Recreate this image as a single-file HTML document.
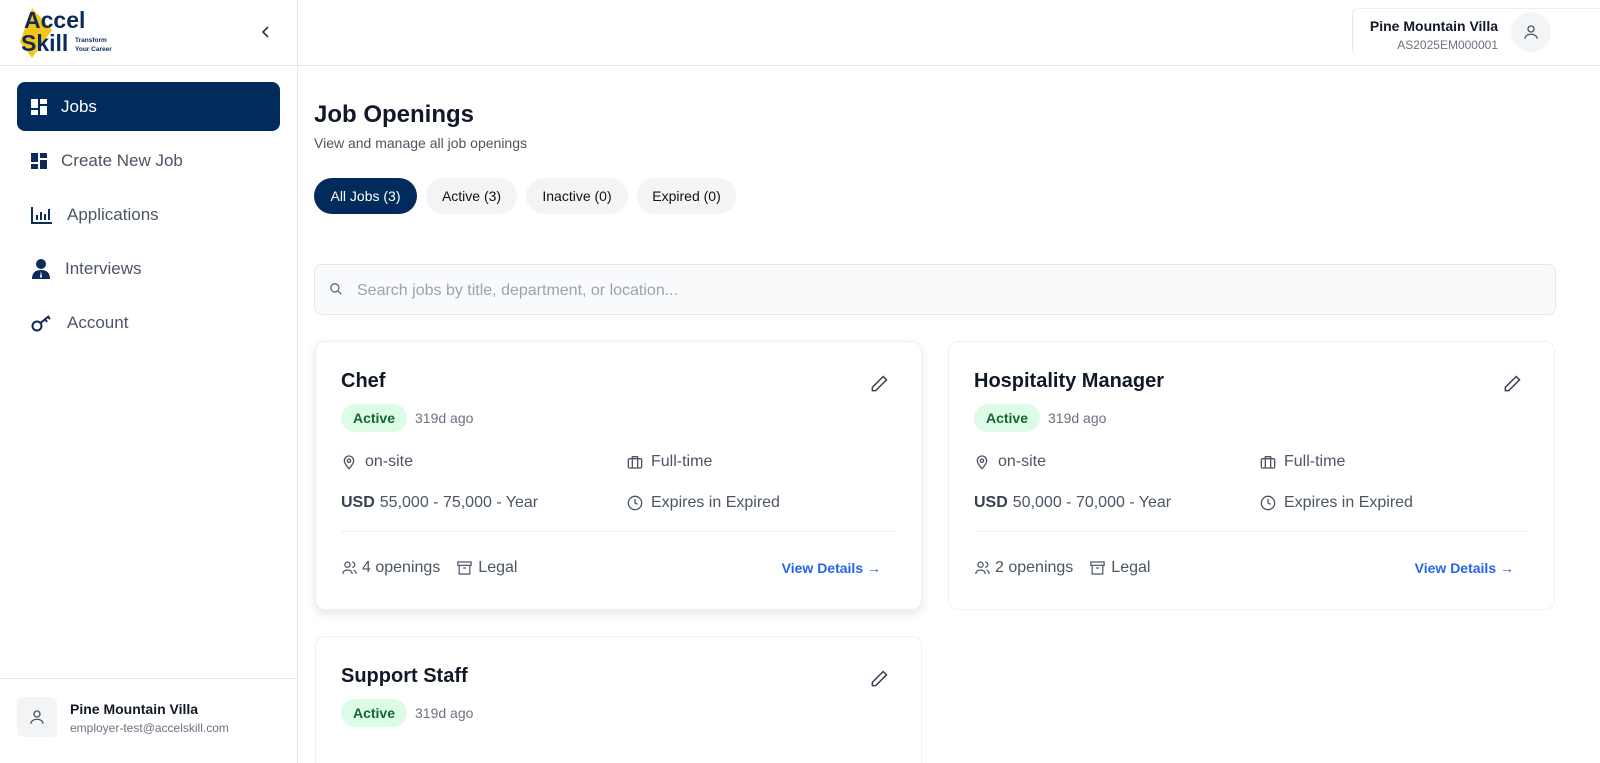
<!DOCTYPE html>
<html style="width:1600px;height:763px;overflow:hidden"><head><meta charset="utf-8"><style>
*{box-sizing:border-box;margin:0;padding:0}
body{width:1600px;height:763px;overflow:hidden;font-family:"Liberation Sans",sans-serif;background:#fff;color:#111827;position:relative}
.sb{position:absolute;left:0;top:0;width:298px;height:763px;border-right:1px solid #e5e7eb;background:#fff}
.logo{position:absolute;left:18px;top:6px}
.nav{position:absolute;left:17px;width:263px;height:49px;border-radius:8px;display:flex;align-items:center;padding-left:14px;font-size:17px;color:#4b5563}
.nav svg{margin-right:14px}
.nav.on{background:#002b5c;color:#fff}
.hdr{position:absolute;left:298px;top:0;right:0;height:66px;border-bottom:1px solid #e5e7eb}
.ub{position:absolute;left:1352px;top:8px;width:248px;height:48px;border-left:1px solid #e5e7eb;border-top:1px solid #eee;border-radius:6px 0 0 6px}
.av{position:absolute;width:40px;height:40px;border-radius:50%;background:#f3f4f6;display:flex;align-items:center;justify-content:center}
.tab{position:absolute;top:178px;height:36px;border-radius:18px;background:#f3f4f6;font-size:14px;display:flex;align-items:center;justify-content:center;color:#111}
.card{position:absolute;width:607px;border:1px solid #eef0f2;border-radius:10px;background:#fff;overflow:hidden}
.card h3{position:absolute;left:25px;top:28px;font-size:20px;font-weight:600}
.pen{position:absolute;right:32px;top:32px}
.badge{position:absolute;left:25px;top:62px;height:28px;width:66px;border-radius:14px;background:#dcfce7;color:#166534;font-size:14px;font-weight:600;display:flex;align-items:center;justify-content:center}
.ago{position:absolute;left:99px;top:68px;font-size:14px;color:#6b7280}
.it{position:absolute;font-size:16px;color:#4b5563;display:flex;align-items:center}
.it svg{margin-right:8px}
.sep{position:absolute;left:25px;right:25px;top:189px;border-top:1px solid #eef0f2}
.vd{position:absolute;right:40px;top:218px;color:#2563eb;font-size:14px;font-weight:600}
</style></head><body>
<div class="sb">
 <div class="logo">
  <svg width="110" height="52" viewBox="0 0 110 52">
   <polygon points="14,2 34,24 14,52 2,36" fill="#f5c518"/>
   <text x="6" y="22" font-family="Liberation Sans" font-weight="700" font-size="23" fill="#0d2a5c">Accel</text>
   <text x="3" y="45" font-family="Liberation Sans" font-weight="700" font-size="23" fill="#0d2a5c">Skill</text>
   <text x="57" y="36" font-family="Liberation Sans" font-size="6.5" fill="#0d2a5c" font-weight="700">Transform</text>
   <text x="57" y="45" font-family="Liberation Sans" font-size="6.5" fill="#0d2a5c" font-weight="700">Your Career</text>
  </svg>
 </div>
 <svg style="position:absolute;left:260px;top:25px" width="12" height="14" viewBox="0 0 12 14"><path d="M8 2 3 7l5 5" fill="none" stroke="#333" stroke-width="1.6"/></svg>
 <div style="position:absolute;left:0;top:65px;width:297px;border-top:1px solid #e5e7eb"></div>
 <div class="nav on" style="top:82px"><svg width="16" height="16"><rect x="0" y="0" width="7" height="9" fill="#fff"/><rect x="9" y="0" width="7" height="5" fill="#fff"/><rect x="0" y="11" width="7" height="5" fill="#fff"/><rect x="9" y="7" width="7" height="9" fill="#fff"/></svg>Jobs</div>
 <div class="nav" style="top:136px"><svg width="16" height="16"><rect x="0" y="0" width="7" height="9" fill="#0d2a5c"/><rect x="9" y="0" width="7" height="5" fill="#0d2a5c"/><rect x="0" y="11" width="7" height="5" fill="#0d2a5c"/><rect x="9" y="7" width="7" height="9" fill="#0d2a5c"/></svg>Create New Job</div>
 <div class="nav" style="top:190px"><svg width="22" height="18"><path d="M1 1v16h20" fill="none" stroke="#0d2a5c" stroke-width="2"/><path d="M6 14V9M10 14V6M14 14V8M18 14V3" stroke="#0d2a5c" stroke-width="2"/></svg>Applications</div>
 <div class="nav" style="top:244px"><svg width="20" height="20"><circle cx="10" cy="5" r="5" fill="#0d2a5c"/><path d="M1 20q0-9 9-9t9 9z" fill="#0d2a5c"/><path d="M10 12l-1 6 1 1 1-1z" fill="#fff"/></svg>Interviews</div>
 <div class="nav" style="top:298px"><svg width="22" height="18"><circle cx="6" cy="12" r="4.5" fill="none" stroke="#0d2a5c" stroke-width="2"/><path d="M9.5 9 18 2M14 5l2 3M17 3l2 2" stroke="#0d2a5c" stroke-width="2" fill="none"/></svg>Account</div>
 <div style="position:absolute;left:0;top:678px;width:297px;border-top:1px solid #e5e7eb"></div>
 <div style="position:absolute;left:17px;top:697px;width:40px;height:40px;border-radius:6px;background:#f3f4f6;display:flex;align-items:center;justify-content:center"><svg width="18" height="18" viewBox="0 0 24 24" fill="none" stroke="#4b5563" stroke-width="1.8"><circle cx="12" cy="8" r="4"/><path d="M4 21c0-4 4-6 8-6s8 2 8 6"/></svg></div>
 <div style="position:absolute;left:70px;top:701px;font-size:14px;font-weight:700">Pine Mountain Villa</div>
 <div style="position:absolute;left:70px;top:721px;font-size:12px;color:#6b7280">employer-test@accelskill.com</div>
</div>
<div class="hdr"></div>
<div class="ub">
 <div style="position:absolute;right:102px;top:9px;font-size:14px;font-weight:700;white-space:nowrap">Pine Mountain Villa</div>
 <div style="position:absolute;right:102px;top:29px;font-size:12px;color:#6b7280">AS2025EM000001</div>
 <div class="av" style="left:158px;top:3px"><svg width="18" height="18" viewBox="0 0 24 24" fill="none" stroke="#4b5563" stroke-width="1.8"><circle cx="12" cy="8" r="4"/><path d="M4 21c0-4 4-6 8-6s8 2 8 6"/></svg></div>
</div>
<div style="position:absolute;left:314px;top:101px;font-size:24px;font-weight:700">Job Openings</div>
<div style="position:absolute;left:314px;top:135px;font-size:14px;color:#4b5563">View and manage all job openings</div>
<div class="tab" style="left:314px;width:103px;background:#002b5c;color:#fff">All Jobs (3)</div>
<div class="tab" style="left:426px;width:91px">Active (3)</div>
<div class="tab" style="left:526px;width:102px">Inactive (0)</div>
<div class="tab" style="left:637px;width:99px">Expired (0)</div>
<div style="position:absolute;left:314px;top:264px;width:1242px;height:51px;border:1px solid #e5e7eb;border-radius:8px;background:#f9fafb">
 <svg style="position:absolute;left:14px;top:17px" width="14" height="14" viewBox="0 0 24 24" fill="none" stroke="#6b7280" stroke-width="2.4"><circle cx="10" cy="10" r="7"/><path d="m15 15 6 6"/></svg>
 <div style="position:absolute;left:42px;top:17px;font-size:16px;color:#9ca3af">Search jobs by title, department, or location...</div>
</div>

<div class="card" style="left:315px;top:341px;height:269px;box-shadow:0 4px 10px rgba(0,0,0,.1)">
 <h3>Chef</h3>
 <svg class="pen" width="20" height="20" viewBox="0 0 24 24" fill="none" stroke="#374151" stroke-width="1.8"><path d="M17 3l4 4L8 20H4v-4z"/></svg>
 <div class="badge">Active</div><div class="ago">319d ago</div>
 <div class="it" style="left:25px;top:111px"><svg width="16" height="18" viewBox="0 0 24 24" fill="none" stroke="#4b5563" stroke-width="2"><path d="M12 22s7-7 7-12a7 7 0 0 0-14 0c0 5 7 12 7 12z"/><circle cx="12" cy="10" r="2.5"/></svg>on-site</div>
 <div class="it" style="left:311px;top:111px"><svg width="16" height="16" viewBox="0 0 24 24" fill="none" stroke="#4b5563" stroke-width="2"><rect x="2" y="7" width="20" height="14" rx="2"/><path d="M8 7V4h8v3M8 7v14M16 7v14"/></svg>Full-time</div>
 <div class="it" style="left:25px;top:152px"><b style="color:#374151;margin-right:5px">USD</b>55,000 - 75,000 - Year</div>
 <div class="it" style="left:311px;top:152px"><svg width="16" height="16" viewBox="0 0 24 24" fill="none" stroke="#4b5563" stroke-width="2"><circle cx="12" cy="12" r="10"/><path d="M12 6v6l4 2"/></svg>Expires in Expired</div>
 <div class="sep"></div>
 <div class="it" style="left:25px;top:217px"><svg width="17" height="16" viewBox="0 0 24 24" fill="none" stroke="#4b5563" stroke-width="1.8" style="margin-right:4px"><circle cx="9" cy="7" r="4"/><path d="M2 21c0-4 3-6 7-6s7 2 7 6M16 3a4 4 0 0 1 0 8M22 21c0-3-2-5-4-6"/></svg>4 openings<svg width="17" height="16" viewBox="0 0 24 24" fill="none" stroke="#4b5563" stroke-width="1.8" style="margin:0 5px 0 16px"><rect x="2" y="3" width="20" height="5"/><path d="M4 8v13h16V8M10 12h4"/></svg>Legal</div>
 <div class="vd">View Details →</div>
</div>

<div class="card" style="left:948px;top:341px;height:269px">
 <h3>Hospitality Manager</h3>
 <svg class="pen" width="20" height="20" viewBox="0 0 24 24" fill="none" stroke="#374151" stroke-width="1.8"><path d="M17 3l4 4L8 20H4v-4z"/></svg>
 <div class="badge">Active</div><div class="ago">319d ago</div>
 <div class="it" style="left:25px;top:111px"><svg width="16" height="18" viewBox="0 0 24 24" fill="none" stroke="#4b5563" stroke-width="2"><path d="M12 22s7-7 7-12a7 7 0 0 0-14 0c0 5 7 12 7 12z"/><circle cx="12" cy="10" r="2.5"/></svg>on-site</div>
 <div class="it" style="left:311px;top:111px"><svg width="16" height="16" viewBox="0 0 24 24" fill="none" stroke="#4b5563" stroke-width="2"><rect x="2" y="7" width="20" height="14" rx="2"/><path d="M8 7V4h8v3M8 7v14M16 7v14"/></svg>Full-time</div>
 <div class="it" style="left:25px;top:152px"><b style="color:#374151;margin-right:5px">USD</b>50,000 - 70,000 - Year</div>
 <div class="it" style="left:311px;top:152px"><svg width="16" height="16" viewBox="0 0 24 24" fill="none" stroke="#4b5563" stroke-width="2"><circle cx="12" cy="12" r="10"/><path d="M12 6v6l4 2"/></svg>Expires in Expired</div>
 <div class="sep"></div>
 <div class="it" style="left:25px;top:217px"><svg width="17" height="16" viewBox="0 0 24 24" fill="none" stroke="#4b5563" stroke-width="1.8" style="margin-right:4px"><circle cx="9" cy="7" r="4"/><path d="M2 21c0-4 3-6 7-6s7 2 7 6M16 3a4 4 0 0 1 0 8M22 21c0-3-2-5-4-6"/></svg>2 openings<svg width="17" height="16" viewBox="0 0 24 24" fill="none" stroke="#4b5563" stroke-width="1.8" style="margin:0 5px 0 16px"><rect x="2" y="3" width="20" height="5"/><path d="M4 8v13h16V8M10 12h4"/></svg>Legal</div>
 <div class="vd">View Details →</div>
</div>

<div class="card" style="left:315px;top:636px;height:127px;border-bottom:none;border-radius:10px 10px 0 0">
 <h3>Support Staff</h3>
 <svg class="pen" width="20" height="20" viewBox="0 0 24 24" fill="none" stroke="#374151" stroke-width="1.8"><path d="M17 3l4 4L8 20H4v-4z"/></svg>
 <div class="badge">Active</div><div class="ago">319d ago</div>
</div>
</body></html>
